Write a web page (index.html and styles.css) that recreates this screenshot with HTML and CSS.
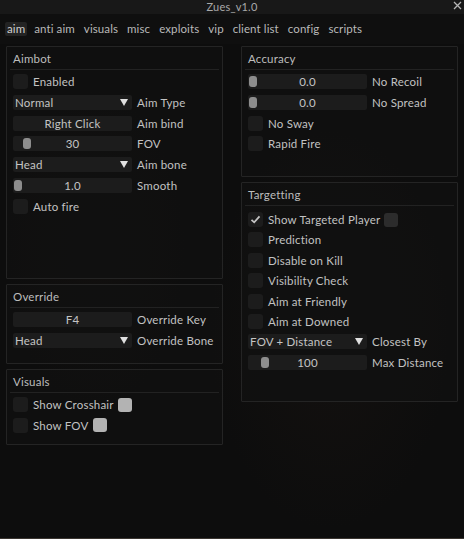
FILE: index.html
```html
<!DOCTYPE html>
<html>
<head>
<meta charset="utf-8">
<link rel="stylesheet" href="styles.css">
</head>
<body>
<div class="window">
  <header class="titlebar">
    <span></span>
    <span class="title">Zues_v1.0</span>
    <span class="close"><svg width="9" height="9" viewBox="0 0 9 9"><path d="M1 1L8 8M8 1L1 8" stroke="#b5b5b5" stroke-width="1.3"/></svg></span>
  </header>
  <nav class="tabs">
    <span class="tab active">aim</span>
    <span class="tab">anti aim</span>
    <span class="tab">visuals</span>
    <span class="tab">misc</span>
    <span class="tab">exploits</span>
    <span class="tab">vip</span>
    <span class="tab">client list</span>
    <span class="tab">config</span>
    <span class="tab">scripts</span>
  </nav>
  <main class="content">
    <div class="col">
      <section class="panel aimbot">
        <div class="phead">Aimbot</div>
        <div class="pbody">
          <div class="row"><span class="cb"></span><span class="lbl">Enabled</span></div>
          <div class="row"><span class="ctl dd">Normal<svg class="arrow" width="8" height="7" viewBox="0 0 8 7"><path d="M0 0H8L4 7Z" fill="#e0e0e0"/></svg></span><span class="lbl">Aim Type</span></div>
          <div class="row"><span class="ctl btn">Right Click</span><span class="lbl">Aim bind</span></div>
          <div class="row"><span class="ctl sl"><span class="knob" style="left:10px"></span>30</span><span class="lbl">FOV</span></div>
          <div class="row"><span class="ctl dd">Head<svg class="arrow" width="8" height="7" viewBox="0 0 8 7"><path d="M0 0H8L4 7Z" fill="#e0e0e0"/></svg></span><span class="lbl">Aim bone</span></div>
          <div class="row"><span class="ctl sl"><span class="knob" style="left:1px"></span>1.0</span><span class="lbl">Smooth</span></div>
          <div class="row"><span class="cb"></span><span class="lbl">Auto fire</span></div>
        </div>
      </section>
      <section class="panel override">
        <div class="phead">Override</div>
        <div class="pbody">
          <div class="row"><span class="ctl btn">F4</span><span class="lbl">Override Key</span></div>
          <div class="row"><span class="ctl dd">Head<svg class="arrow" width="8" height="7" viewBox="0 0 8 7"><path d="M0 0H8L4 7Z" fill="#e0e0e0"/></svg></span><span class="lbl">Override Bone</span></div>
        </div>
      </section>
      <section class="panel visuals">
        <div class="phead">Visuals</div>
        <div class="pbody">
          <div class="row"><span class="cb"></span><span class="lbl">Show Crosshair</span><span class="swatch light"></span></div>
          <div class="row"><span class="cb"></span><span class="lbl">Show FOV</span><span class="swatch light"></span></div>
        </div>
      </section>
    </div>
    <div class="col">
      <section class="panel accuracy">
        <div class="phead">Accuracy</div>
        <div class="pbody">
          <div class="row"><span class="ctl sl"><span class="knob" style="left:1px"></span>0.0</span><span class="lbl">No Recoil</span></div>
          <div class="row"><span class="ctl sl"><span class="knob" style="left:1px"></span>0.0</span><span class="lbl">No Spread</span></div>
          <div class="row"><span class="cb"></span><span class="lbl">No Sway</span></div>
          <div class="row"><span class="cb"></span><span class="lbl">Rapid Fire</span></div>
        </div>
      </section>
      <section class="panel targetting">
        <div class="phead">Targetting</div>
        <div class="pbody">
          <div class="row"><span class="cb"><svg width="15" height="15" viewBox="0 0 15 15"><path d="M3.5 7.8L6.2 10.3L11.5 4.3" fill="none" stroke="#c4c4c4" stroke-width="1.8"/></svg></span><span class="lbl">Show Targeted Player</span><span class="swatch dark"></span></div>
          <div class="row"><span class="cb"></span><span class="lbl">Prediction</span></div>
          <div class="row"><span class="cb"></span><span class="lbl">Disable on Kill</span></div>
          <div class="row"><span class="cb"></span><span class="lbl">Visibility Check</span></div>
          <div class="row"><span class="cb"></span><span class="lbl">Aim at Friendly</span></div>
          <div class="row"><span class="cb"></span><span class="lbl">Aim at Downed</span></div>
          <div class="row"><span class="ctl dd">FOV + Distance<svg class="arrow" width="8" height="7" viewBox="0 0 8 7"><path d="M0 0H8L4 7Z" fill="#e0e0e0"/></svg></span><span class="lbl">Closest By</span></div>
          <div class="row"><span class="ctl sl"><span class="knob" style="left:13px"></span>100</span><span class="lbl">Max Distance</span></div>
        </div>
      </section>
    </div>
  </main>
</div>
</body>
</html>
```
FILE: styles.css
```css
* { box-sizing: border-box; }
html, body { margin: 0; padding: 0; }
body {
  width: 464px;
  height: 539px;
  overflow: hidden;
  background: #0c0c0c;
  font-family: Lato, "Open Sans", sans-serif;
  font-size: 11.5px;
  letter-spacing: 0.2px;
  color: #c2c2c2;
}
.window {
  height: 539px;
  background:
    radial-gradient(ellipse 120px 200px at 330px 330px, rgba(40,28,22,0.25), transparent),
    radial-gradient(ellipse 90px 160px at 95px 250px, rgba(30,22,18,0.25), transparent),
    #0d0d0d;
  border-bottom: 1px solid #3a3530;
}
.titlebar {
  height: 14px;
  background: #181818;
  display: grid;
  grid-template-columns: 1fr auto 1fr;
  align-items: center;
}
.title {
  font-size: 11px;
  line-height: 14px;
  color: #a9a9a9;
}
.close {
  justify-self: end;
  display: flex;
  margin-right: 2px;
  margin-top: -3px;
}
.tabs {
  height: 30px;
  display: flex;
  gap: 5px;
  padding: 8px 5px 0;
  background: #0f0f0f;
}
.tab {
  height: 14px;
  line-height: 14px;
  padding: 0 2px;
  border-radius: 2px;
  color: #b9b9b9;
  font-size: 11.5px;
  letter-spacing: 0.1px;
}
.tab.active {
  background: #232323;
  color: #cfcfcf;
}
.content {
  display: flex;
  gap: 18px;
  padding: 2px 0 0 6px;
}
.col {
  width: 217px;
  display: flex;
  flex-direction: column;
  gap: 5px;
}
.panel {
  border: 1px solid #242424;
  background: rgba(17,17,17,0.85);
  padding: 0 3px;
  border-radius: 1px;
}
.aimbot { height: 233px; }
.override { height: 80px; }
.visuals { height: 76px; }
.accuracy { height: 131px; }
.targetting { height: 220px; }
.phead {
  padding: 1px 3px 0;
  line-height: 21px;
  border-bottom: 1px solid #222;
  color: #bdbdbd;
}
.pbody {
  padding: 4px 3px 0;
  display: flex;
  flex-direction: column;
  gap: 5.75px;
}
.targetting .pbody { padding-top: 6px; gap: 5.4px; }
.row {
  height: 15px;
  display: flex;
  align-items: center;
  gap: 5px;
}
.lbl {
  line-height: 15px;
  white-space: nowrap;
}
.cb {
  width: 15px;
  height: 15px;
  border-radius: 3px;
  background: #1c1c1c;
  flex: none;
  display: flex;
}
.ctl {
  position: relative;
  width: 119px;
  height: 15px;
  line-height: 15px;
  background: #1c1c1c;
  border-radius: 2px;
  flex: none;
  color: #c4c4c4;
}
.btn, .sl { text-align: center; }
.dd {
  padding-left: 2px;
}
.arrow {
  position: absolute;
  right: 4px;
  top: 4px;
}
.knob {
  position: absolute;
  top: 2px;
  width: 8px;
  height: 11px;
  border-radius: 3px;
  background: #8d8d8d;
}
.swatch {
  width: 14px;
  height: 14px;
  border-radius: 3px;
  flex: none;
  margin-left: -1px;
}
.swatch.light { background: #b3b3b3; }
.swatch.dark { background: #2c2c2c; }
```
